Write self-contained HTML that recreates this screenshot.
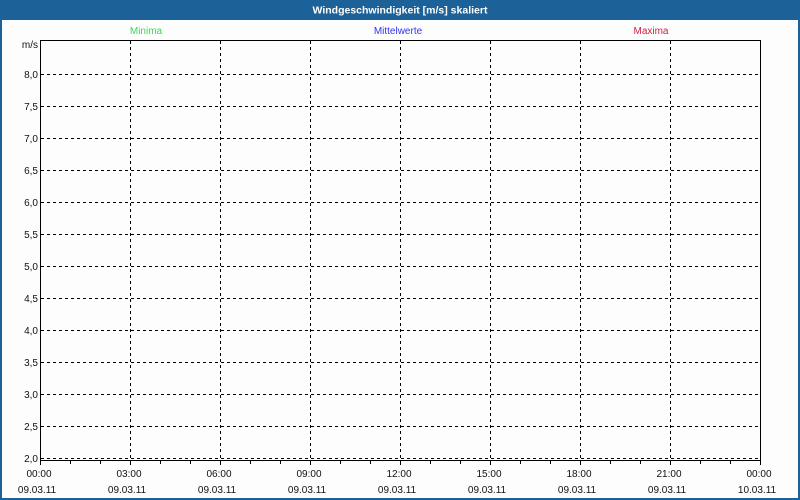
<!DOCTYPE html>
<html><head><meta charset="utf-8"><style>
html,body{margin:0;padding:0;width:800px;height:500px;overflow:hidden;background:#fff}
svg{display:block}
text{font-family:"Liberation Sans",sans-serif;font-size:10px}
</style></head><body>
<svg width="800" height="500" xmlns="http://www.w3.org/2000/svg">
<rect x="0" y="0" width="800" height="500" fill="#1c6197"/>
<rect x="2" y="20" width="796" height="478" fill="#fcfdfc"/>
<text x="400" y="13.5" text-anchor="middle" fill="#fff" font-weight="bold" style="font-size:10.5px">Windgeschwindigkeit [m/s] skaliert</text>
<text x="146" y="34" text-anchor="middle" fill="#33dd55">Minima</text>
<text x="398" y="34" text-anchor="middle" fill="#3333ee">Mittelwerte</text>
<text x="651" y="34" text-anchor="middle" fill="#cc2244">Maxima</text>
<g stroke="#000" stroke-width="1" stroke-dasharray="3,3" shape-rendering="crispEdges">
<line x1="41" y1="74.5" x2="760" y2="74.5"/><line x1="41" y1="106.5" x2="760" y2="106.5"/>
<line x1="41" y1="138.5" x2="760" y2="138.5"/><line x1="41" y1="170.5" x2="760" y2="170.5"/>
<line x1="41" y1="202.5" x2="760" y2="202.5"/><line x1="41" y1="234.5" x2="760" y2="234.5"/>
<line x1="41" y1="266.5" x2="760" y2="266.5"/><line x1="41" y1="298.5" x2="760" y2="298.5"/>
<line x1="41" y1="330.5" x2="760" y2="330.5"/><line x1="41" y1="362.5" x2="760" y2="362.5"/>
<line x1="41" y1="394.5" x2="760" y2="394.5"/><line x1="41" y1="426.5" x2="760" y2="426.5"/>
<line x1="41" y1="458.5" x2="760" y2="458.5"/>
<line x1="130.5" y1="41" x2="130.5" y2="460"/><line x1="220.5" y1="41" x2="220.5" y2="460"/>
<line x1="310.5" y1="41" x2="310.5" y2="460"/><line x1="400.5" y1="41" x2="400.5" y2="460"/>
<line x1="490.5" y1="41" x2="490.5" y2="460"/><line x1="580.5" y1="41" x2="580.5" y2="460"/>
<line x1="670.5" y1="41" x2="670.5" y2="460"/>
</g>
<g stroke="#000" stroke-width="1" shape-rendering="crispEdges" fill="none">
<path d="M40.5 40.5H760.5V460.5H40.5Z"/>
<path d="M40.5 461V465M70.5 461V464M100.5 461V464M130.5 461V465M160.5 461V464M190.5 461V464M220.5 461V465M250.5 461V464M280.5 461V464M310.5 461V465M340.5 461V464M370.5 461V464M400.5 461V465M430.5 461V464M460.5 461V464M490.5 461V465M520.5 461V464M550.5 461V464M580.5 461V465M610.5 461V464M640.5 461V464M670.5 461V465M700.5 461V464M730.5 461V464M760.5 461V465"/>
</g>
<g fill="#111" text-anchor="end">
<text x="38" y="48">m/s</text>
<text x="38" y="78">8,0</text><text x="38" y="110">7,5</text><text x="38" y="142">7,0</text>
<text x="38" y="174">6,5</text><text x="38" y="206">6,0</text><text x="38" y="238">5,5</text>
<text x="38" y="270">5,0</text><text x="38" y="302">4,5</text><text x="38" y="334">4,0</text>
<text x="38" y="366">3,5</text><text x="38" y="398">3,0</text><text x="38" y="430">2,5</text>
<text x="38" y="462">2,0</text>
</g>
<g fill="#111" text-anchor="middle">
<text x="39" y="477">00:00</text><text x="129" y="477">03:00</text><text x="219" y="477">06:00</text>
<text x="309" y="477">09:00</text><text x="399" y="477">12:00</text><text x="489" y="477">15:00</text>
<text x="579" y="477">18:00</text><text x="669" y="477">21:00</text><text x="759" y="477">00:00</text>
<text x="37" y="493">09.03.11</text><text x="127" y="493">09.03.11</text><text x="217" y="493">09.03.11</text>
<text x="307" y="493">09.03.11</text><text x="397" y="493">09.03.11</text><text x="487" y="493">09.03.11</text>
<text x="577" y="493">09.03.11</text><text x="667" y="493">09.03.11</text><text x="757" y="493">10.03.11</text>
</g>
</svg>
</body></html>
